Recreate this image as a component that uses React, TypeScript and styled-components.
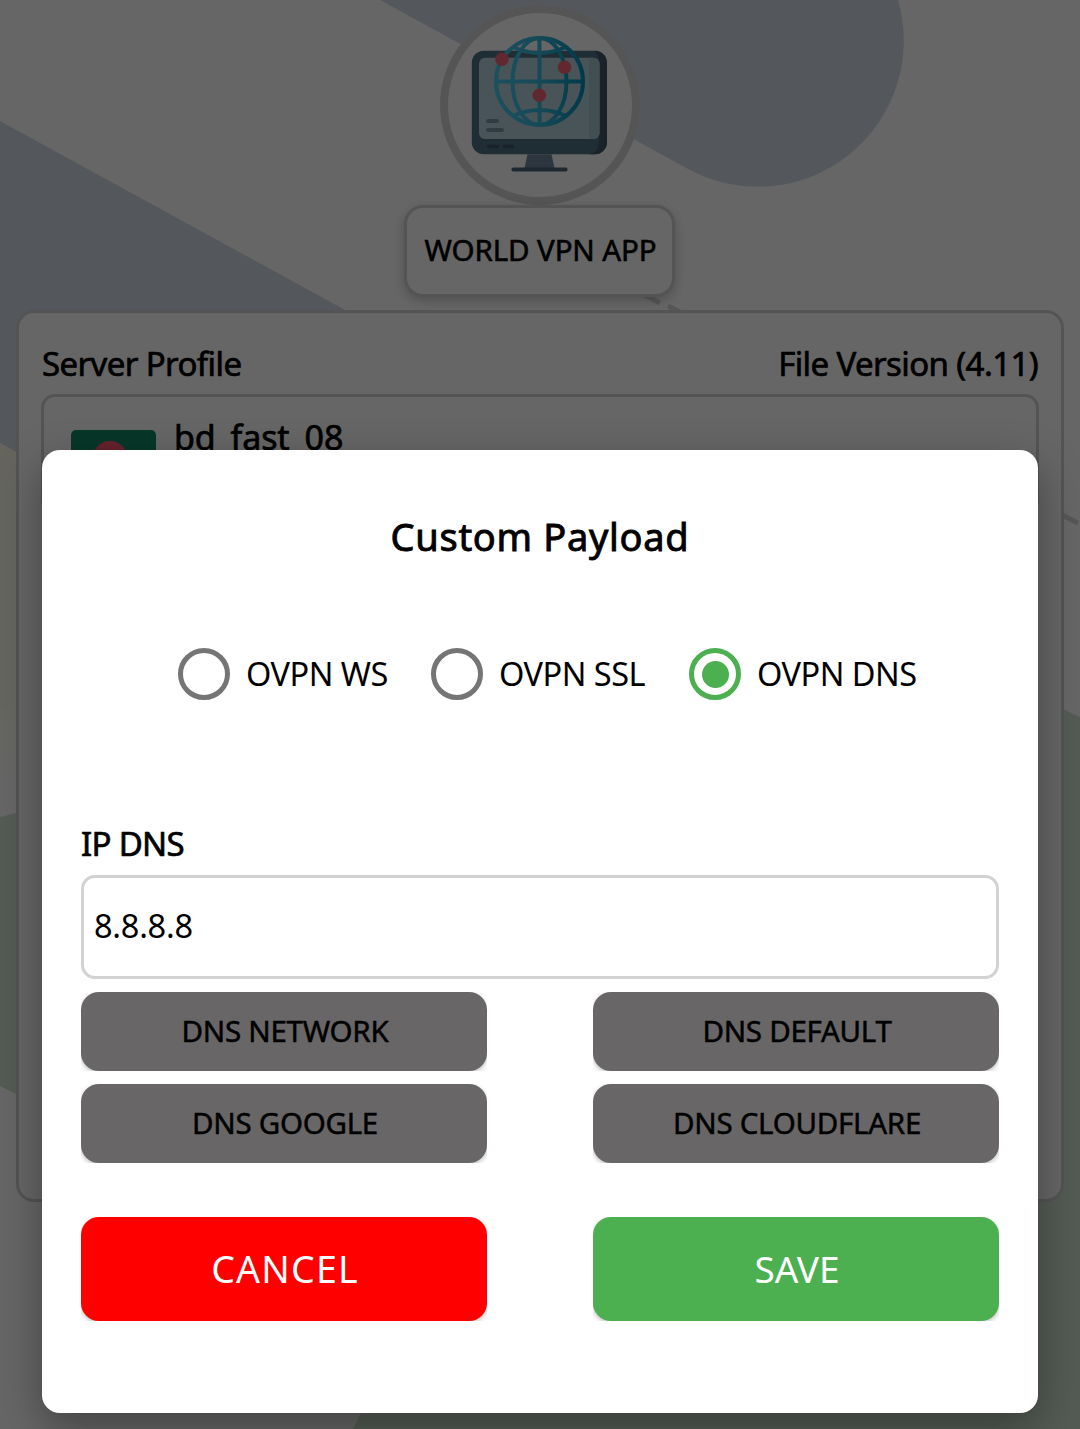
import React, { useState } from "react";
import styled, { createGlobalStyle } from "styled-components";

const GlobalStyle = createGlobalStyle`
  * { box-sizing: border-box; }
  body { margin: 0; background: #666; }
  button, input { font: inherit; }
`;

const Screen = styled.div`
  position: relative;
  width: 1080px;
  height: 1429px;
  overflow: hidden;
  background: #fff;
  color: #000;
  font-family: "Noto Sans", sans-serif;
`;

const Backdrop = styled.svg`
  position: absolute;
  inset: 0;
`;

const Page = styled.div`
  position: relative;
  display: flex;
  flex-direction: column;
  align-items: center;
  height: 100%;
  padding: 5px 16px 227px;
`;

const Logo = styled.div`
  flex: none;
  width: 200px;
  height: 200px;
  border: 8px solid #d6d4d4;
  border-radius: 50%;
  background: #fff;
`;

const AppName = styled.h1`
  display: flex;
  flex: none;
  align-items: center;
  justify-content: center;
  width: 271px;
  height: 92px;
  margin: 0 1px 13px 0;
  padding: 0 0 3px 2px;
  border: 3px solid #d2d2d2;
  border-radius: 19px;
  background: #fff;
  box-shadow: 0 4px 12px rgba(0, 0, 0, 0.22);
  font-size: 29.5px;
  font-weight: 400;
  letter-spacing: -0.12px;
  -webkit-text-stroke: 0.6px #000;
`;

const Card = styled.section`
  flex: 1;
  width: 1048px;
  padding: 25px 23px;
  border: 3px solid #d2d2d2;
  border-radius: 18px;
  background: #fff;
`;

const CardHead = styled.div`
  display: flex;
  justify-content: space-between;
  height: 56px;
  font-size: 33px;
  line-height: 51px;
  letter-spacing: -0.6px;
  -webkit-text-stroke: 0.7px #000;
`;

const Profile = styled.div`
  display: flex;
  gap: 18px;
  height: 120px;
  margin: 0 -1px;
  padding: 0 27px;
  border: 3px solid #d2d2d2;
  border-radius: 14px;
`;

const Flag = styled.div`
  width: 85px;
  height: 56px;
  margin-top: 33px;
  border-radius: 5px;
  background: radial-gradient(circle at 39px 28px, #ff5570 16.5px, #128a68 17.5px);
`;

const ProfileName = styled.div`
  padding-top: 15px;
  font-size: 34px;
  line-height: 50px;
  letter-spacing: -0.1px;
  -webkit-text-stroke: 0.7px #000;
`;

const Scrim = styled.div`
  position: absolute;
  inset: 0;
  display: flex;
  flex-direction: column;
  align-items: center;
  padding-top: 450px;
  background: rgba(0, 0, 0, 0.6);
`;

const Dialog = styled.div`
  display: flex;
  flex-direction: column;
  width: 996px;
  height: 963px;
  padding: 54px 39px 0;
  border-radius: 18px;
  background: #fff;
  box-shadow: 0 16px 44px rgba(0, 0, 0, 0.34);
`;

const DialogTitle = styled.h2`
  margin: 0;
  font-size: 38px;
  font-weight: 400;
  line-height: 64px;
  text-align: center;
  letter-spacing: 0.7px;
  -webkit-text-stroke: 0.9px #000;
`;

const Choices = styled.div`
  display: flex;
  height: 52px;
  margin: 80px 0 0 97px;
`;

const Choice = styled.label<{ $width: number }>`
  display: flex;
  align-items: center;
  gap: 16px;
  width: ${(p) => p.$width}px;
  font-size: 32.5px;
  line-height: 50px;
  letter-spacing: -0.5px;
  white-space: nowrap;
`;

const Radio = styled.input`
  display: grid;
  place-items: center;
  flex: none;
  appearance: none;
  width: 52px;
  height: 52px;
  margin: 0;
  border: 5px solid #757575;
  border-radius: 50%;

  &:checked { border-color: #4caf50; }
  &:checked::before {
    content: "";
    width: 27px;
    height: 27px;
    border-radius: 50%;
    background: #4caf50;
  }
`;

const FieldLabel = styled.label`
  margin-top: 118px;
  height: 57px;
  font-size: 33px;
  line-height: 51px;
  letter-spacing: -0.7px;
  -webkit-text-stroke: 0.7px #000;
`;

const Field = styled.input`
  height: 104px;
  padding: 0 10px 3px;
  border: 3px solid #d2d2d2;
  border-radius: 14px;
  outline: none;
  background: #fff;
  color: #000;
  font-size: 32.5px;
  letter-spacing: -0.25px;
`;

const Grid = styled.div<{ $top: number }>`
  display: grid;
  grid-template-columns: 406px 406px;
  justify-content: space-between;
  row-gap: 13px;
  margin-top: ${(p) => p.$top}px;
`;

/* Clips the button's shadow so that it only shows in the corners. */
const Clip = styled.div`
  overflow: hidden;
`;

const DnsButton = styled.button`
  display: block;
  width: 100%;
  height: 79px;
  padding: 0 0 2px 2px;
  border: 0;
  border-radius: 18px;
  background: #696667;
  box-shadow: 0 2px 5px rgba(0, 0, 0, 0.25);
  color: #000;
  font-size: 29.5px;
  letter-spacing: -0.27px;
  -webkit-text-stroke: 0.5px #000;
`;

const ActionButton = styled.button<{ $color: string; $size: number; $spacing: number }>`
  display: block;
  width: 100%;
  height: 104.5px;
  padding: 0 0 2px 2px;
  border: 0;
  border-radius: 18px;
  background: ${(p) => p.$color};
  box-shadow: 0 2px 5px rgba(0, 0, 0, 0.25);
  color: #fff;
  font-size: ${(p) => p.$size}px;
  letter-spacing: ${(p) => p.$spacing}px;
`;

const Shapes = () => (
  <Backdrop width="1080" height="1429" viewBox="0 0 1080 1429">
    <defs>
      <linearGradient id="cream" x1="0" x2="0" y1="443" y2="785" gradientUnits="userSpaceOnUse">
        <stop offset="0" stopColor="#fdfdec" />
        <stop offset="0.75" stopColor="#fdfdf0" />
        <stop offset="1" stopColor="#ffffff" />
      </linearGradient>
    </defs>
    <path d="M380 0L688 169A146 146 0 0 0 898 0Z" fill="#d3dce7" />
    <path d="M0 121L420 351V690L0 443Z" fill="#d3dce7" />
    <path d="M0 443L60 477V785H0Z" fill="url(#cream)" />
    <path d="M0 817L60 802V1116L0 1086Z" fill="#d1e4d3" />
    <path d="M353 1429Q378 1375 420 1340L1000 680L1080 717V1429Z" fill="#d1e4d3" />
    <path d="M643 294L660 303M668 306L690 317M1062 515L1078 523" stroke="#d8d8d8" strokeWidth="5" />
  </Backdrop>
);

const WorldMonitor = () => (
  <svg width="184" height="184" viewBox="448 13 184 184" fill="none">
    <defs>
      <linearGradient id="globe" x1="495" x2="584" y1="0" y2="0" gradientUnits="userSpaceOnUse">
        <stop offset="0" stopColor="#45c8ea" />
        <stop offset="0.5" stopColor="#38b8dc" />
        <stop offset="1" stopColor="#0090b8" />
      </linearGradient>
    </defs>
    <rect x="471.8" y="50.7" width="135" height="103.6" rx="12" fill="#4f7082" />
    <path d="M594 50.7h1a12 12 0 0 1 12 12v79.500a12 12 0 0 1-12 12h-6q10-2 10-12V62q0-9-5-11.300Z" fill="#3f5566" />
    <rect x="479" y="57.700" width="120.500" height="81.300" rx="6" fill="#b3d2d9" />
    <path d="M589 57.700h4.500a6 6 0 0 1 6 6V133a6 6 0 0 1-6 6H589Z" fill="#a6c5cc" />
    <path d="M488 121h9M488 130h14" stroke="#7f93a5" strokeWidth="3.800" strokeLinecap="round" />
    <path d="M488.500 146.500h9M504.500 146.500h8" stroke="#3e5766" strokeWidth="3.500" strokeLinecap="round" />
    <path d="M527.500 154.300H551.500L554.500 168H524.500Z" fill="#71869b" />
    <path d="M513.500 169.500h52" stroke="#4b657b" strokeWidth="4.200" strokeLinecap="round" />
    <g stroke="url(#globe)" strokeWidth="4">
      <circle cx="539.500" cy="81.500" r="43.500" />
      <ellipse cx="539.500" cy="81.500" rx="27" ry="43.500" />
      <path d="M539.400 38L539.600 125M496 81.400L583 81.600M513 47Q539.500 59 566 47M513 116Q539.500 104 566 116" />
    </g>
    <g fill="#f56478">
      <circle cx="502" cy="59.300" r="6.800" />
      <circle cx="564.500" cy="67.300" r="6.800" />
      <circle cx="539.300" cy="95.300" r="6.800" />
    </g>
  </svg>
);

const MODES = [
  { name: "OVPN WS", width: 253 },
  { name: "OVPN SSL", width: 258 },
  { name: "OVPN DNS", width: 260 },
];

const PRESETS = ["DNS NETWORK", "DNS DEFAULT", "DNS GOOGLE", "DNS CLOUDFLARE"];

export default function App() {
  const [mode, setMode] = useState("OVPN DNS");
  const [ip, setIp] = useState("8.8.8.8");

  return (
    <Screen>
      <GlobalStyle />
      <Shapes />
      <Page>
        <Logo><WorldMonitor /></Logo>
        <AppName>WORLD VPN APP</AppName>
        <Card>
          <CardHead>
            <span>Server Profile</span>
            <span>File Version (4.11)</span>
          </CardHead>
          <Profile>
            <Flag />
            <ProfileName>bd_fast_08</ProfileName>
          </Profile>
        </Card>
      </Page>
      <Scrim>
        <Dialog role="dialog">
          <DialogTitle>Custom Payload</DialogTitle>
          <Choices>
            {MODES.map((m) => (
              <Choice key={m.name} $width={m.width}>
                <Radio type="radio" name="mode" checked={mode === m.name} onChange={() => setMode(m.name)} />
                {m.name}
              </Choice>
            ))}
          </Choices>
          <FieldLabel htmlFor="ip">IP DNS</FieldLabel>
          <Field id="ip" value={ip} onChange={(e) => setIp(e.target.value)} />
          <Grid $top={13.4}>
            {PRESETS.map((name) => (
              <Clip key={name}><DnsButton>{name}</DnsButton></Clip>
            ))}
          </Grid>
          <Grid $top={53.4}>
            <Clip><ActionButton $color="#ff0000" $size={37.5} $spacing={1.2}>CANCEL</ActionButton></Clip>
            <Clip><ActionButton $color="#4caf50" $size={37} $spacing={0}>SAVE</ActionButton></Clip>
          </Grid>
        </Dialog>
      </Scrim>
    </Screen>
  );
}
